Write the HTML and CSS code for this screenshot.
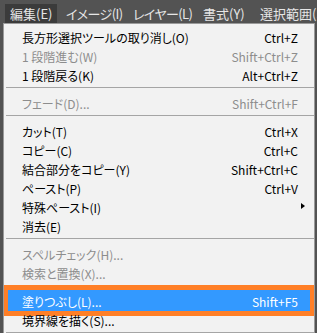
FILE: index.html
```html
<!DOCTYPE html>
<html lang="ja">
<head>
<meta charset="utf-8">
<link rel="stylesheet" href="styles.css">
</head>
<body>
<div class="menubar">
  <span class="mb-item active">編集(E)</span>
  <span class="mb-item mb-image">イメージ(I)</span>
  <span class="mb-item mb-layer">レイヤー(L)</span>
  <span class="mb-item mb-type">書式(Y)</span>
  <span class="mb-item">選択範囲(S)</span>
</div>
<div class="panel">
  <div class="row"><span>長方形選択ツールの取り消し(O)</span><span>Ctrl+Z</span></div>
  <div class="row disabled"><span>1 段階進む(W)</span><span>Shift+Ctrl+Z</span></div>
  <div class="row"><span>1 段階戻る(K)</span><span>Alt+Ctrl+Z</span></div>
  <div class="sep"></div>
  <div class="row disabled"><span>フェード(D)...</span><span>Shift+Ctrl+F</span></div>
  <div class="sep"></div>
  <div class="row"><span>カット(T)</span><span>Ctrl+X</span></div>
  <div class="row"><span>コピー(C)</span><span>Ctrl+C</span></div>
  <div class="row"><span>結合部分をコピー(Y)</span><span>Shift+Ctrl+C</span></div>
  <div class="row"><span>ペースト(P)</span><span>Ctrl+V</span></div>
  <div class="row"><span>特殊ペースト(I)</span><span class="arrow"></span></div>
  <div class="row"><span>消去(E)</span><span></span></div>
  <div class="sep"></div>
  <div class="row disabled"><span>スペルチェック(H)...</span><span></span></div>
  <div class="row disabled"><span>検索と置換(X)...</span><span></span></div>
  <div class="sep sep-short"></div>
  <div class="row selected"><span>塗りつぶし(L)...</span><span>Shift+F5</span><div class="mark"></div></div>
  <div class="row"><span>境界線を描く(S)...</span><span></span></div>
  <div class="sep"></div>
</div>
</body>
</html>
```
FILE: styles.css
```css
html, body {
  margin: 0;
  padding: 0;
}
body {
  width: 317px;
  height: 333px;
  overflow: hidden;
  background: #535353;
  font-family: "Noto Sans CJK JP", "Noto Sans", sans-serif;
  font-feature-settings: "palt";
}
.menubar {
  height: 23px;
  display: flex;
  align-items: flex-end;
  padding-left: 5px;
  white-space: nowrap;
  overflow: hidden;
}
.mb-item {
  flex: none;
  height: 19px;
  line-height: 19px;
  padding: 0 0 0 5px;
  font-size: 13px;
  color: #e6e6e6;
  box-sizing: border-box;
}
.mb-item.active {
  width: 52px;
  margin-right: 4px;
  background: #3b3b3b;
}
.mb-image {
  width: 67px;
  letter-spacing: -0.6px;
}
.mb-layer {
  width: 70px;
  letter-spacing: -0.6px;
}
.mb-type {
  width: 57px;
}
.panel {
  margin-left: 3px;
  width: 310px;
  height: 305px;
  background: #f2f2f2;
  border: 1px solid #9a9a9a;
  border-bottom: none;
  padding-top: 4px;
  overflow: hidden;
}
.row {
  position: relative;
  height: 19px;
  display: flex;
  align-items: center;
  justify-content: space-between;
  padding: 0 16px 0 18px;
  font-size: 12px;
  color: #000;
  white-space: nowrap;
}
.row.disabled {
  color: #8d8d8d;
}
.row.selected {
  height: 19px;
  padding-top: 2px;
  background: #3399ff;
  color: #fff;
  margin: 0 1px;
  padding-left: 17px;
  padding-right: 15px;
}
.sep {
  height: 9px;
  position: relative;
}
.sep::before {
  content: "";
  position: absolute;
  left: 2px;
  right: 0;
  top: 2px;
  height: 1px;
  background: #a5a5a5;
}
.sep.sep-short {
  height: 7px;
}
.arrow {
  width: 0;
  height: 0;
  border-top: 3.5px solid transparent;
  border-bottom: 3.5px solid transparent;
  border-left: 4px solid #000;
  margin-right: -7px;
  margin-top: -3px;
}
.mark {
  position: absolute;
  left: -2px;
  right: -2px;
  top: -5px;
  bottom: -5px;
  border: 5px solid #ff7f27;
  pointer-events: none;
}
```
